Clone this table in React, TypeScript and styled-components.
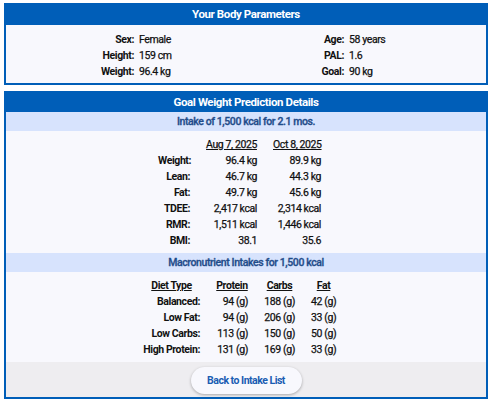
import React from "react";
import styled, { createGlobalStyle } from "styled-components";

const Global = createGlobalStyle`
  html, body { margin: 0; padding: 0; background: #ffffff; }
  body { font-family: Roboto, "Liberation Sans", Arial, sans-serif; color: #111111; }
  * { box-sizing: border-box; }
`;

const Page = styled.div`
  display: flex;
  flex-direction: column;
  gap: 6px;
  padding: 3px 2px 0 4px;
  width: 490px;
`;

const Panel = styled.section`
  border: 2px solid #005eb8;
  background: #f8f8fd;
  display: flex;
  flex-direction: column;
`;

const PanelHeader = styled.h2<{ $h: number }>`
  margin: -2px -2px 0 -2px;
  height: ${(p) => p.$h}px;
  background: #005eb8;
  color: #ffffff;
  font-size: 11.5px;
  font-weight: 700;
  letter-spacing: -0.4px;
  display: flex;
  align-items: center;
  justify-content: center;
`;

const SubHeader = styled.div`
  height: 19px;
  background: #d7e3fd;
  color: #1f4c8a;
  font-size: 10.5px;
  font-weight: 500;
  letter-spacing: -0.4px;
  -webkit-text-stroke: 0.3px currentColor;
  display: flex;
  align-items: center;
  justify-content: center;
`;

const ParamGrid = styled.div`
  display: grid;
  grid-template-columns: 128px 150px 50px 1fr;
  column-gap: 5px;
  padding: 7px 0 3px;
  font-size: 10.5px;
  line-height: 16px;
  letter-spacing: -0.4px;
`;

const Label = styled.span`
  font-weight: 700;
  text-align: right;
  white-space: nowrap;
`;

const Value = styled.span<{ $align?: string }>`
  font-weight: 400;
  -webkit-text-stroke: 0.25px currentColor;
  text-align: ${(p) => p.$align || "left"};
  white-space: nowrap;
`;

const DataTable = styled.div<{ $cols: string; $pt: number; $pb: number }>`
  display: grid;
  grid-template-columns: ${(p) => p.$cols};
  column-gap: 16px;
  justify-content: center;
  padding: ${(p) => p.$pt}px 13px ${(p) => p.$pb}px 0;
  font-size: 10.5px;
  line-height: 16px;
  letter-spacing: -0.4px;
`;

const ColHead = styled.span<{ $bold?: boolean }>`
  text-align: center;
  text-decoration: underline;
  font-weight: ${(p) => (p.$bold ? 700 : 400)};
  -webkit-text-stroke: ${(p) => (p.$bold ? "0" : "0.25px currentColor")};
  white-space: nowrap;
`;

const Footer = styled.div`
  background: #eeedf0;
  height: 35px;
  display: flex;
  justify-content: center;
  padding-top: 5px;
`;

const BackButton = styled.button`
  width: 111px;
  height: 27px;
  border: none;
  border-radius: 14px;
  background: #f8f8fd;
  color: #1a5db3;
  font-family: Roboto, "Liberation Sans", Arial, sans-serif;
  font-size: 10.5px;
  font-weight: 700;
  letter-spacing: -0.5px;
  box-shadow: 0 1px 3px rgba(0, 0, 0, 0.3);
  cursor: pointer;
`;

const params: [string, string, string, string][] = [
  ["Sex:", "Female", "Age:", "58 years"],
  ["Height:", "159 cm", "PAL:", "1.6"],
  ["Weight:", "96.4 kg", "Goal:", "90 kg"],
];

const predictions: [string, string, string][] = [
  ["Weight:", "96.4 kg", "89.9 kg"],
  ["Lean:", "46.7 kg", "44.3 kg"],
  ["Fat:", "49.7 kg", "45.6 kg"],
  ["TDEE:", "2,417 kcal", "2,314 kcal"],
  ["RMR:", "1,511 kcal", "1,446 kcal"],
  ["BMI:", "38.1", "35.6"],
];

const macros: [string, string, string, string][] = [
  ["Balanced:", "94 (g)", "188 (g)", "42 (g)"],
  ["Low Fat:", "94 (g)", "206 (g)", "33 (g)"],
  ["Low Carbs:", "113 (g)", "150 (g)", "50 (g)"],
  ["High Protein:", "131 (g)", "169 (g)", "33 (g)"],
];

export default function App() {
  return (
    <Page>
      <Global />
      <Panel>
        <PanelHeader $h={22}>Your Body Parameters</PanelHeader>
        <ParamGrid>
          {params.map((r) => (
            <React.Fragment key={r[0]}>
              <Label>{r[0]}</Label>
              <Value>{r[1]}</Value>
              <Label>{r[2]}</Label>
              <Value>{r[3]}</Value>
            </React.Fragment>
          ))}
        </ParamGrid>
      </Panel>
      <Panel>
        <PanelHeader $h={21}>Goal Weight Prediction Details</PanelHeader>
        <SubHeader>Intake of 1,500 kcal for 2.1 mos.</SubHeader>
        <DataTable $cols="32px 51px 48px" $pt={6} $pb={4}>
          <span />
          <ColHead>Aug 7, 2025</ColHead>
          <ColHead>Oct 8, 2025</ColHead>
          {predictions.map((r) => (
            <React.Fragment key={r[0]}>
              <Label>{r[0]}</Label>
              <Value $align="right">{r[1]}</Value>
              <Value $align="right">{r[2]}</Value>
            </React.Fragment>
          ))}
        </DataTable>
        <SubHeader>Macronutrient Intakes for 1,500 kcal</SubHeader>
        <DataTable $cols="57px 32px 31px 25px" $pt={6} $pb={4}>
          <ColHead $bold>Diet Type</ColHead>
          <ColHead $bold>Protein</ColHead>
          <ColHead $bold>Carbs</ColHead>
          <ColHead $bold>Fat</ColHead>
          {macros.map((r) => (
            <React.Fragment key={r[0]}>
              <Label>{r[0]}</Label>
              <Value $align="right">{r[1]}</Value>
              <Value $align="right">{r[2]}</Value>
              <Value $align="right">{r[3]}</Value>
            </React.Fragment>
          ))}
        </DataTable>
        <Footer>
          <BackButton>Back to Intake List</BackButton>
        </Footer>
      </Panel>
    </Page>
  );
}
